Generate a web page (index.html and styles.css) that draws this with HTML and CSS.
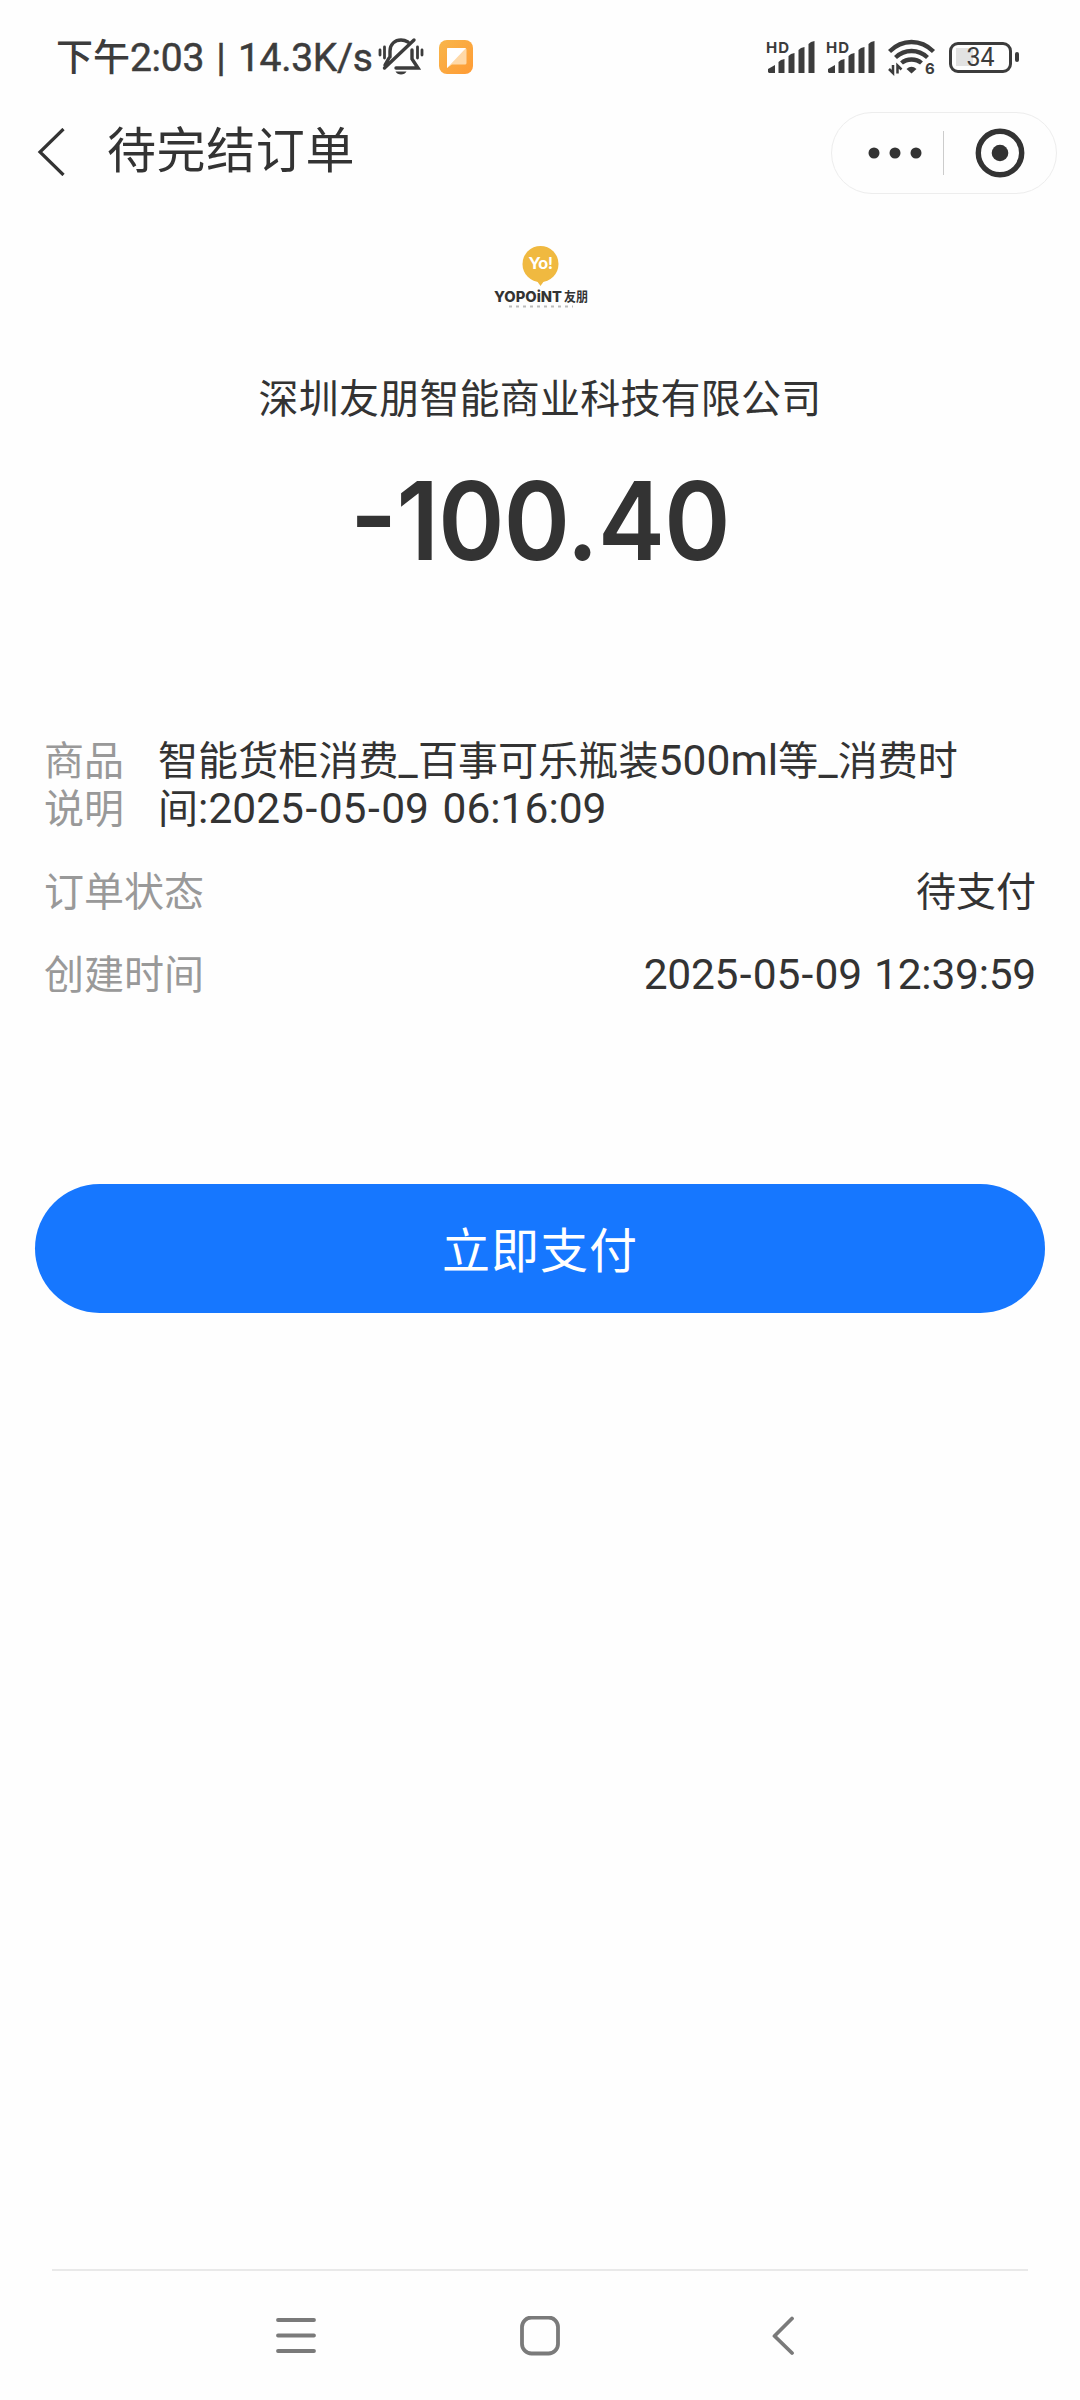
FILE: index.html
```html
<!DOCTYPE html>
<html lang="zh-CN">
<head>
<meta charset="utf-8">
<title>待完结订单</title>
<link rel="stylesheet" href="styles.css">
</head>
<body>
<div class="screen">
  <div class="status">
    <div class="status-text">下午<span class="status-num">2:03 | 14.3K/s</span></div>
    <svg class="bell" width="46" height="40" viewBox="0 0 46 40" fill="none" stroke="#3c3c3c" stroke-width="3.4" stroke-linecap="round">
      <path d="M2 13v5M6.500 10v11M44 13v5M39.500 10v11" stroke-width="2.800"/>
      <path d="M12 20v-6C12 7 17 3 23 3c3 0 5 .8 7 2M34 13v9l6 9H18M6.500 31L36 3M11 21l-4 7"/>
      <path d="M17.500 34.500h11c-1 2-3 3-5.500 3s-4.500-1-5.500-3z" fill="#3c3c3c" stroke="none"/>
    </svg>
    <svg class="app" width="34" height="34" viewBox="0 0 34 34">
      <defs><linearGradient id="orange" x2="1" y2="1"><stop stop-color="#f8b64a"/><stop offset="1" stop-color="#ff9b35"/></linearGradient></defs>
      <rect width="34" height="34" rx="8" fill="url(#orange)"/>
      <path d="M9 8h17a1.500 1.500 0 0 1 1.500 1.500V23a1.500 1.500 0 0 1-1.500 1.500H13L8 28V9a1 1 0 0 1 1-1z" fill="#ffd9a8"/>
      <path d="M9 8h18L8 28V9a1 1 0 0 1 1-1z" fill="#fff"/>
    </svg>
    <div class="status-right">
      <svg width="50" height="46" viewBox="0 -6 50 46" fill="#3c3c3c">
        <text class="hd" x="0" y="12.500" textLength="23">HD</text>
        <path d="M2 32v-3l7-4v8H3zM12.500 33V22q2-2.500 6-3v14zM22.500 33V16q2-2.500 6-3v20zM32.500 33V10q2-2.500 6-3v26zM42.500 33V4q2-2.500 6-3v32z"/>
      </svg>
      <svg width="50" height="46" viewBox="0 -6 50 46" fill="#3c3c3c">
        <text class="hd" x="0" y="12.500" textLength="23">HD</text>
        <path d="M2 32v-3l7-4v8H3zM12.500 33V22q2-2.500 6-3v14zM22.500 33V16q2-2.500 6-3v20zM32.500 33V10q2-2.500 6-3v26zM42.500 33V4q2-2.500 6-3v32z"/>
      </svg>
      <svg class="wifi" width="48" height="48" viewBox="0 -6 48 48" fill="none" stroke="#3c3c3c">
        <path d="M1.500 12.500Q11 3 23.500 3T45.500 12.500M7.500 18.500Q14.500 12 23.500 12T39.500 18.500M13.500 24Q17.500 20.500 23.500 20.500T33.500 24" stroke-width="4.300"/>
        <path d="M18.500 30q5-4.500 10 0l-5 4.500z" fill="#3c3c3c" stroke="none"/>
        <path d="M5 26v8l-4-4M9.500 34.500v-8l4 4" stroke-width="2.500"/>
        <text class="gen" x="37" y="34.500">6</text>
      </svg>
      <div class="battery"><span>34</span></div>
      <div class="battery-tip"></div>
    </div>
  </div>

  <header class="header">
    <svg width="28" height="48" viewBox="0 0 28 48" fill="none" stroke="#333" stroke-width="3.200"><path d="M26.500 1L3 24l23.500 23"/></svg>
    <h1 class="title">待完结订单</h1>
    <div class="capsule">
      <svg width="54" height="12" viewBox="0 0 54 12" fill="#333"><circle cx="6" cy="6" r="5.500"/><circle cx="27" cy="6" r="5.500"/><circle cx="48" cy="6" r="5.500"/></svg>
      <i class="divider"></i>
      <svg width="50" height="50" viewBox="0 0 50 50"><circle cx="25" cy="25" r="21.700" fill="none" stroke="#333" stroke-width="5.400"/><circle cx="25" cy="25" r="8.300" fill="#333"/></svg>
    </div>
  </header>

  <main class="main">
    <svg class="logo" width="100" height="72" viewBox="0 0 100 72">
      <circle cx="50.500" cy="20" r="18" fill="#f0b940"/>
      <path d="M47 37h7l-3.500 5z" fill="#f0b940"/>
      <text class="logo-yo" x="51" y="25" text-anchor="middle">Yo!</text>
      <text class="logo-name" x="4" y="57.500" textLength="68" lengthAdjust="spacingAndGlyphs">YOPOiNT</text>
      <text class="logo-cn" x="74" y="57" textLength="24" lengthAdjust="spacingAndGlyphs">友朋</text>
      <path d="M19 62.500h64" stroke="#bbb" stroke-width="2" stroke-dasharray="3 4"/>
    </svg>
    <div class="company">深圳友朋智能商业科技有限公司</div>
    <div class="amount"><span class="minus">-</span>100.40</div>

    <section class="details">
      <div class="row">
        <div class="label narrow">商品说明</div>
        <div class="value wide">智能货柜消费<span class="num">_</span>百事可乐瓶装<span class="num">500ml</span>等<span class="num">_</span>消费时<br>间<span class="num start">:2025<b>-</b>05<b>-</b>09 06:16:09</span></div>
      </div>
      <div class="row">
        <div class="label">订单状态</div>
        <div class="value">待支付</div>
      </div>
      <div class="row">
        <div class="label">创建时间</div>
        <div class="value"><span class="num date">2025<b>-</b>05<b>-</b>09 12:39:59</span></div>
      </div>
    </section>
    <button class="pay">立即支付</button>
  </main>

  <nav class="nav">
    <svg width="40" height="40" viewBox="0 0 40 40" stroke="#7a7a7a" stroke-width="3.800" stroke-linecap="round"><path d="M2 4h36M2 19.500h36M2 35h36"/></svg>
    <svg width="40" height="40" viewBox="0 0 40 40" fill="none" stroke="#7a7a7a" stroke-width="3.800"><rect x="2" y="1.500" width="36" height="36" rx="9.500"/></svg>
    <svg width="40" height="40" viewBox="0 0 40 40" fill="none" stroke="#7a7a7a" stroke-width="3.800" stroke-linecap="round" stroke-linejoin="round"><path d="M28 2.500L10.500 20 28 37"/></svg>
  </nav>
</div>
</body>
</html>
```
FILE: styles.css
```css
* { box-sizing: border-box; }
body { margin: 0; background: #fefefe; }
svg { display: block; flex: none; }

.screen {
  width: 1080px;
  height: 2400px;
  display: flex;
  flex-direction: column;
  color: #333;
  font-family: Roboto, "Noto Sans CJK SC", sans-serif;
  font-size: 40px;
}

/* status bar */
.status {
  height: 112px;
  display: flex;
  align-items: center;
  padding: 2px 61px 0 56px;
  color: #3c3c3c;
}
.status-text {
  width: 315px;
  padding-top: 2px;
  font-size: 37px;
  font-weight: 500;
  line-height: 50px;
  white-space: nowrap;
}
.status-num {
  font-size: 39px;
  font-weight: 400;
  letter-spacing: -0.300px;
  word-spacing: 3px;
  -webkit-text-stroke: 0.5px #3c3c3c;
}
.bell { margin-left: 7px; }
.app { margin-left: 15px; }
.status-right {
  margin-left: auto;
  display: flex;
  align-items: center;
  gap: 10px;
}
.hd { font: 700 15px Inter, sans-serif; }
.gen { font: 700 15px Inter, sans-serif; fill: #3c3c3c; stroke: none; }
.wifi { margin-left: 2px; }
.battery {
  width: 63px;
  height: 31px;
  margin-left: 3px;
  border: 3.500px solid #3c3c3c;
  border-radius: 9px;
  background: linear-gradient(#e2e2e2, #e2e2e2) 4px center / 17px 18px no-repeat;
  font-size: 25px;
  line-height: 25px;
  text-align: center;
}
.battery-tip {
  width: 4px;
  height: 10px;
  margin-left: -7px;
  border-radius: 2px;
  background: #3c3c3c;
}

/* page header */
.header {
  height: 82px;
  display: flex;
  align-items: center;
  padding: 0 23px 0 37px;
}
.header > svg { margin-top: -3px; }
.title {
  margin: -2px 0 0 42px;
  font-size: 49px;
  font-weight: 400;
  line-height: 70px;
  letter-spacing: 0.600px;
}
.capsule {
  width: 226px;
  height: 82px;
  margin-left: auto;
  padding: 0 31px 0 36px;
  display: flex;
  align-items: center;
  border: 1.500px solid #ededed;
  border-radius: 41px;
}
.divider { width: 1px; height: 44px; margin: 0 auto 0 21px; background: #ccc; }

/* payment */
.main { display: flex; flex-direction: column; align-items: center; }
.logo { margin-top: 50px; }
.logo-yo { font: 900 17px Lato, sans-serif; fill: #fff; }
.logo-name { font: 800 15px Inter, sans-serif; fill: #333; }
.logo-cn { font: 700 13px "Noto Sans CJK SC", sans-serif; fill: #333; }
.company {
  margin-top: 54px;
  line-height: 60px;
  letter-spacing: 0.200px;
}
.amount {
  margin-top: 25px;
  height: 132px;
  font-family: Inter, sans-serif;
  font-size: 108px;
  font-weight: 600;
  line-height: 132px;
  letter-spacing: -0.700px;
  transform: scaleX(0.93);
}
.minus { position: relative; top: -6px; }
.details {
  width: 1080px;
  margin-top: 151px;
  padding: 0 44px;
  display: flex;
  flex-direction: column;
  gap: 35px;
  line-height: 48px;
}
.row { display: flex; justify-content: space-between; }
.label { color: #999; }
.narrow { width: 81px; }
.wide { width: 878px; letter-spacing: 0.100px; }
.num { font-size: 42.500px; line-height: 1px; }
.date { letter-spacing: -0.250px; word-spacing: 2px; }
.start { letter-spacing: 0; word-spacing: 3px; }
.num b { font-weight: 400; padding: 0 1.500px; }
.pay {
  width: 1010px;
  height: 129px;
  margin-top: 184px;
  padding: 0 0 4px;
  border: 0;
  border-radius: 65px;
  background: #1677ff;
  color: #fff;
  font: 400 48px Roboto, "Noto Sans CJK SC", sans-serif;
  letter-spacing: 1px;
}

/* system navigation */
.nav {
  height: 131px;
  margin: auto 52px 0;
  padding: 0 224px;
  display: flex;
  align-items: center;
  justify-content: space-between;
  border-top: 2px solid #e9e9e9;
}
```
